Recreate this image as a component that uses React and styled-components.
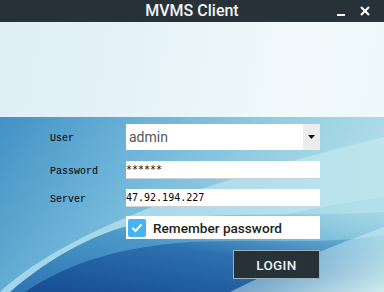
import React from "react";
import styled, { createGlobalStyle } from "styled-components";

const Global = createGlobalStyle`
  html, body { margin: 0; padding: 0; }
  body { width: 384px; height: 292px; overflow: hidden; font-family: Roboto, "Liberation Sans", sans-serif; }
`;

const Window = styled.div`
  width: 384px;
  height: 292px;
  display: flex;
  flex-direction: column;
  overflow: hidden;
`;

const TitleBar = styled.div`
  height: 22px;
  flex: none;
  background: #263238;
  position: relative;
  display: flex;
  align-items: center;
  justify-content: center;
`;

const Title = styled.div`
  color: #f2f4f5;
  font-family: Roboto, sans-serif;
  font-weight: 500;
  font-size: 16px;
  line-height: 22px;
`;

const Controls = styled.div`
  position: absolute;
  right: 14px;
  top: 0;
  height: 22px;
  display: flex;
  align-items: center;
  gap: 14px;
`;

const Hero = styled.div`
  height: 95px;
  flex: none;
  background: linear-gradient(100deg, #dfeff5 0%, #e6f3f8 40%, #f1f9fb 75%, #eef8fa 100%);
`;

const Panel = styled.div`
  flex: 1;
  position: relative;
  display: grid;
  grid-template-columns: 76px 194px;
  align-content: start;
  padding: 7px 0 0 50px;
`;

const Backdrop = styled.svg`
  position: absolute;
  inset: 0;
  width: 100%;
  height: 100%;
  z-index: 0;
`;

const Label = styled.div`
  position: relative;
  z-index: 1;
  font-family: "Liberation Mono", monospace;
  font-size: 10px;
  color: #000;
  display: flex;
  align-items: center;
  padding-top: ${(p) => p.$dy || 0}px;
  margin-top: ${(p) => p.$mt || 0}px;
  grid-column: 1;
`;

const Combo = styled.div`
  position: relative;
  z-index: 1;
  grid-column: 2;
  height: 26px;
  background: #fff;
  display: flex;
  align-items: center;
`;

const ComboText = styled.div`
  flex: 1;
  padding-left: 3px;
  font-family: Roboto, sans-serif;
  font-size: 14px;
  color: #555;
`;

const ComboButton = styled.div`
  width: 17px;
  height: 26px;
  background: #ececec;
  display: flex;
  align-items: center;
  justify-content: center;
`;

const Field = styled.div`
  position: relative;
  z-index: 1;
  grid-column: 2;
  height: 17px;
  margin-top: ${(p) => p.$mt || 0}px;
  background: #fff;
  border-bottom: 1px solid #c9d3d8;
  font-family: "DejaVu Sans Mono", monospace;
  font-size: 10px;
  color: #000;
  display: flex;
  align-items: center;
  line-height: 17px;
`;

const CheckRow = styled.div`
  position: relative;
  z-index: 1;
  grid-column: 2;
  margin-top: 9px;
  height: 23px;
  background: #fff;
  display: flex;
  align-items: center;
  gap: 7px;
  padding-left: 2px;
`;

const Box = styled.div`
  width: 18px;
  height: 18px;
  border-radius: 2px;
  background: #45b4f2;
  display: flex;
  align-items: center;
  justify-content: center;
`;

const CheckLabel = styled.span`
  font-family: Roboto, sans-serif;
  font-size: 13.6px;
  font-weight: 500;
  color: #222;
`;

const LoginButton = styled.button`
  position: relative;
  z-index: 1;
  grid-column: 2;
  justify-self: end;
  margin-top: 11px;
  width: 87px;
  height: 29px;
  background: #263238;
  border: 1px solid #9fb0b6;
  color: #eef1f2;
  font-family: Roboto, sans-serif;
  font-weight: 500;
  font-size: 13.5px;
  letter-spacing: 0.3px;
  padding: 0;
`;

export default function App() {
  return (
    <Window>
      <Global />
      <TitleBar>
        <Title>MVMS Client</Title>
        <Controls>
          <svg width="9" height="22" viewBox="0 0 9 22">
            <rect x="0" y="14" width="8" height="2" fill="#fff" />
          </svg>
          <svg width="10" height="22" viewBox="0 0 10 22">
            <path d="M1 7 L9 15 M9 7 L1 15" stroke="#fff" strokeWidth="2" />
          </svg>
        </Controls>
      </TitleBar>
      <Hero />
      <Panel>
        <Backdrop viewBox="0 0 384 175" preserveAspectRatio="none">
          <defs>
            <linearGradient id="base" x1="0" y1="0" x2="1" y2="0.3">
              <stop offset="0" stopColor="#4392c4" />
              <stop offset="0.35" stopColor="#6cb3d8" />
              <stop offset="0.7" stopColor="#96cfe2" />
              <stop offset="1" stopColor="#b2dfe9" />
            </linearGradient>
            <linearGradient id="band" x1="0" y1="1" x2="1" y2="0">
              <stop offset="0" stopColor="#a9d8ec" stopOpacity="0.9" />
              <stop offset="1" stopColor="#c8ebf1" stopOpacity="0.6" />
            </linearGradient>
            <linearGradient id="mid" x1="0" y1="1" x2="1" y2="0">
              <stop offset="0" stopColor="#2f73b2" />
              <stop offset="0.5" stopColor="#4a98c8" />
              <stop offset="1" stopColor="#8ccbe0" stopOpacity="0.4" />
            </linearGradient>
            <linearGradient id="navy" x1="0" y1="1" x2="1" y2="0">
              <stop offset="0" stopColor="#164c92" />
              <stop offset="0.6" stopColor="#2d70b0" />
              <stop offset="1" stopColor="#5fa8d2" stopOpacity="0.5" />
            </linearGradient>
            <linearGradient id="glow" x1="0" y1="0" x2="1" y2="1">
              <stop offset="0" stopColor="#c9eef2" stopOpacity="0" />
              <stop offset="1" stopColor="#d8f3f4" stopOpacity="0.95" />
            </linearGradient>
          </defs>
          <rect x="0" y="0" width="384" height="175" fill="url(#base)" />
          <path d="M0 175 C60 120 180 70 384 20 L384 80 C250 100 140 130 20 175 Z" fill="url(#band)" />
          <path d="M10 175 C50 140 100 112 150 104 C220 94 300 100 384 95 L384 175 Z" fill="url(#mid)" />
          <path d="M25 175 C70 145 120 130 190 125 C260 122 330 128 384 118 L384 175 Z" fill="url(#navy)" />
          <path d="M230 175 C280 150 330 130 384 110 L384 175 Z" fill="url(#glow)" />
        </Backdrop>

        <Label $dy={2}>User</Label>
        <Combo>
          <ComboText>admin</ComboText>
          <ComboButton>
            <svg width="7" height="4" viewBox="0 0 7 4">
              <path d="M0 0 H7 L3.5 4 Z" fill="#111" />
            </svg>
          </ComboButton>
        </Combo>

        <Label $mt={11} $dy={2}>Password</Label>
        <Field $mt={11}>******</Field>

        <Label $mt={10} $dy={2}>Server</Label>
        <Field $mt={10}>47.92.194.227</Field>

        <CheckRow>
          <Box>
            <svg width="12" height="10" viewBox="0 0 12 10">
              <path d="M1.5 5 L4.5 8 L10.5 1.5" stroke="#fff" strokeWidth="2" fill="none" />
            </svg>
          </Box>
          <CheckLabel>Remember password</CheckLabel>
        </CheckRow>

        <LoginButton>LOGIN</LoginButton>
      </Panel>
    </Window>
  );
}
